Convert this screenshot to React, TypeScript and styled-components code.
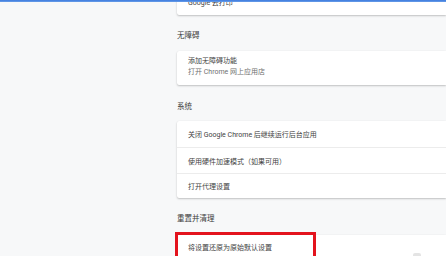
import React from "react";
import styled, { createGlobalStyle } from "styled-components";

const Global = createGlobalStyle`
  html, body { margin: 0; padding: 0; }
  body {
    background: #f7f8f9;
    font-family: Roboto, "Noto Sans CJK SC", "Liberation Sans", sans-serif;
    width: 446px;
    height: 256px;
    overflow: hidden;
  }
`;

const Screen = styled.div`
  position: relative;
  width: 446px;
  height: 256px;
  overflow: hidden;
`;

const TopLine = styled.div`
  position: absolute;
  left: 0;
  top: 0;
  width: 100%;
  height: 2px;
  background: linear-gradient(#3a79de, #6a9ee8);
  z-index: 2;
`;

const Main = styled.div`
  display: flex;
  flex-direction: column;
  margin-top: -11px;
  padding-left: 177px;
`;

const Heading = styled.div<{ $top?: number; $bottom?: number }>`
  padding: ${(p) => p.$top ?? 14}px 0 ${(p) => p.$bottom ?? 8}px;
  font-size: 7.5px;
  line-height: 14px;
  color: #3a3a3a;
`;

const Card = styled.div`
  background: #ffffff;
  border-radius: 2px 0 0 2px;
  box-shadow: 0 1px 2px rgba(0, 0, 0, 0.22), 0 0 1px rgba(0, 0, 0, 0.08);
  display: flex;
  flex-direction: column;
`;

const Row = styled.div<{ $divider?: boolean; $h?: number }>`
  position: relative;
  height: ${(p) => p.$h ?? 26}px;
  display: flex;
  align-items: center;
  padding-left: 11px;
  font-size: 7px;
  color: #424242;
  border-top: ${(p) => (p.$divider ? "1px solid #ececec" : "none")};
  box-sizing: border-box;
`;

const TwoLine = styled.div`
  padding: 5px 0 7px 11px;
  display: flex;
  flex-direction: column;
`;

const Primary = styled.div`
  font-size: 7px;
  line-height: 11px;
  color: #424242;
`;

const Secondary = styled.div`
  font-size: 7px;
  line-height: 11px;
  color: #707070;
`;

const Highlight = styled.div`
  position: absolute;
  left: -2px;
  top: -3px;
  width: 141px;
  height: 30px;
  border: 3px solid #e3131d;
  box-sizing: border-box;
`;

const Corner = styled.div`
  position: absolute;
  left: 236px;
  top: 18px;
  width: 8px;
  height: 6px;
  border-radius: 2px;
  background: #e4e4e4;
`;

export default function App() {
  return (
    <Screen>
      <Global />
      <TopLine />
      <Main>
        <Card>
          <Row>Google 云打印</Row>
        </Card>
        <Heading>无障碍</Heading>
        <Card>
          <TwoLine>
            <Primary>添加无障碍功能</Primary>
            <Secondary>打开 Chrome 网上应用店</Secondary>
          </TwoLine>
        </Card>
        <Heading $top={15} $bottom={7}>系统</Heading>
        <Card>
          <Row>关闭 Google Chrome 后继续运行后台应用</Row>
          <Row $divider>使用硬件加速模式（如果可用）</Row>
          <Row $divider $h={25}>打开代理设置</Row>
        </Card>
        <Heading $top={14} $bottom={9}>重置并清理</Heading>
        <Card>
          <Row $h={24}>
            将设置还原为原始默认设置
            <Highlight />
            <Corner />
          </Row>
        </Card>
      </Main>
    </Screen>
  );
}
